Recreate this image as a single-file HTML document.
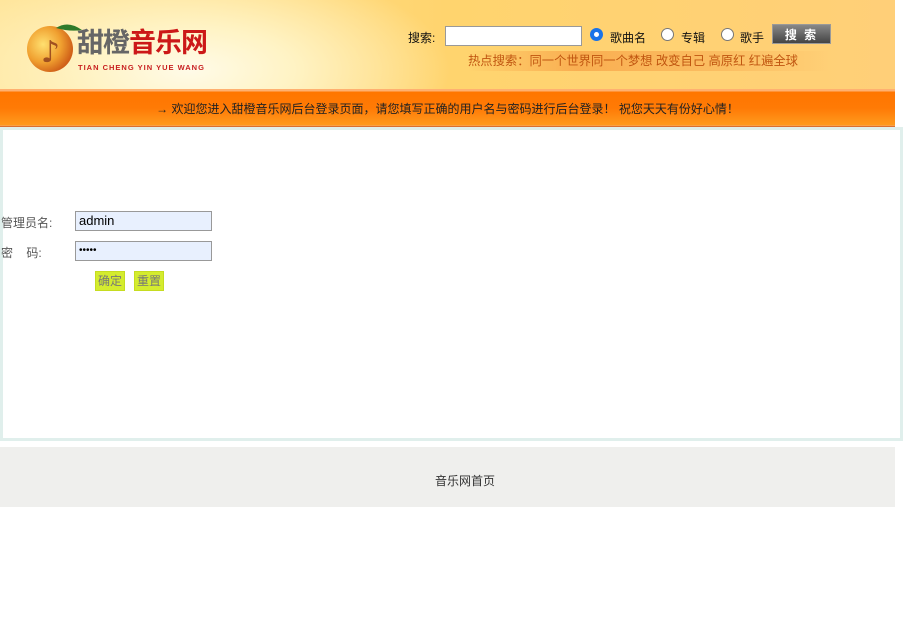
<!DOCTYPE html>
<html><head><meta charset="utf-8">
<style>
*{margin:0;padding:0;box-sizing:border-box}
body{width:903px;height:625px;background:#fff;font-family:"Liberation Sans","Noto Sans CJK SC",sans-serif;font-size:12px;color:#333;position:relative;overflow:hidden}
#hd{position:absolute;left:0;top:0;width:895px;height:89px;background:radial-gradient(ellipse 260px 110px at 190px 70px,#fffbe8 0%,#fff3c4 40%,rgba(255,220,120,0) 100%),linear-gradient(90deg,#ffe59a 0%,#ffd46e 50%,#ffcf78 100%)}
#bar{position:absolute;left:0;top:89px;width:895px;height:38px;background:linear-gradient(#ffb070 0,#ffb070 2px,#ff7600 3px,#ff7a05 50%,#ff9a1e 95%,#ffb060 96%,#c8501a 100%);text-align:center;line-height:40px;color:#222;font-size:12px}
#box{position:absolute;left:0;top:127px;width:903px;height:314px;border:3px solid #e0efec;background:#fff}
#ft{position:absolute;left:0;top:447px;width:895px;height:60px;background:#efefed;line-height:68px;color:#333}
.lbl{position:absolute;left:1px;color:#555;font-size:12px}
.inp{position:absolute;left:75px;width:137px;height:20px;border:1px solid #999;background:#e8f0fe;font-size:13px;padding-left:3px;line-height:18px;color:#000}
.btn{position:absolute;top:271px;height:20px;background:#d4ec2e;border:1px solid #c6dc20;color:#777;font-size:12px;line-height:18px;padding:0 2px}
.rad{position:absolute;top:28px;width:13px;height:13px;border-radius:50%;border:1px solid #777;background:#fff}
</style></head><body>
<div id="hd">
 <svg style="position:absolute;left:26px;top:20px" width="60" height="55" viewBox="0 0 60 55">
  <defs><radialGradient id="g" cx="35%" cy="40%" r="65%"><stop offset="0" stop-color="#ffe070"/><stop offset=".6" stop-color="#f0a030"/><stop offset="1" stop-color="#d06018"/></radialGradient></defs>
  <circle cx="24" cy="29" r="23" fill="url(#g)"/>
  <path d="M30 8 Q42 0 56 10 Q44 12 30 8Z" fill="#2e7a2a"/>
  <text x="15" y="42" font-size="30" fill="#a05020" font-family="DejaVu Sans">♪</text>
 </svg>
 <div style="position:absolute;left:77px;top:25px;font-size:27px;font-weight:bold;letter-spacing:-1px;line-height:32px;font-family:'Noto Sans CJK SC',sans-serif"><span style="color:#666">甜橙</span><span style="color:#cc1818">音乐网</span></div>
 <div style="position:absolute;left:78px;top:63px;font-size:7.5px;color:#c82020;letter-spacing:1px;font-weight:bold">TIAN CHENG YIN YUE WANG</div>
 <div style="position:absolute;left:408px;top:29px;color:#111">搜索:</div>
 <div style="position:absolute;left:445px;top:26px;width:137px;height:20px;border:1px solid #999;background:#fff"></div>
 <div class="rad" style="left:590px;border:4px solid #1a73e8"></div><div style="position:absolute;left:610px;top:29px;color:#111">歌曲名</div>
 <div class="rad" style="left:661px"></div><div style="position:absolute;left:681px;top:29px;color:#111">专辑</div>
 <div class="rad" style="left:721px"></div><div style="position:absolute;left:740px;top:29px;color:#111">歌手</div>
 <div style="position:absolute;left:772px;top:24px;width:59px;height:20px;background:linear-gradient(#888,#444);border:1px solid #999;color:#fff;font-weight:bold;text-align:center;line-height:20px;letter-spacing:2px">搜 索</div>
 <div style="position:absolute;left:468px;top:51px;width:362px;height:20px;background:linear-gradient(90deg,rgba(250,150,60,0) 0%,rgba(245,150,60,.6) 30%,rgba(245,160,70,.4) 70%,rgba(250,170,80,0) 100%);color:#c05510;line-height:20px;font-size:12.3px">热点搜索：同一个世界同一个梦想 改变自己 高原红 红遍全球</div>
</div>
<div id="bar">→ 欢迎您进入甜橙音乐网后台登录页面，请您填写正确的用户名与密码进行后台登录！ 祝您天天有份好心情！</div>
<div id="box"></div>
<div class="lbl" style="top:214px">管理员名:</div>
<div class="inp" style="top:211px">admin</div>
<div class="lbl" style="top:244px">密&nbsp;&nbsp;&nbsp;&nbsp;码:</div>
<div class="inp" style="top:241px;font-size:10px">•••••</div>
<div class="btn" style="left:95px">确定</div>
<div class="btn" style="left:134px">重置</div>
<div id="ft"><span style="position:absolute;left:435px">音乐网首页</span></div>
</body></html>
